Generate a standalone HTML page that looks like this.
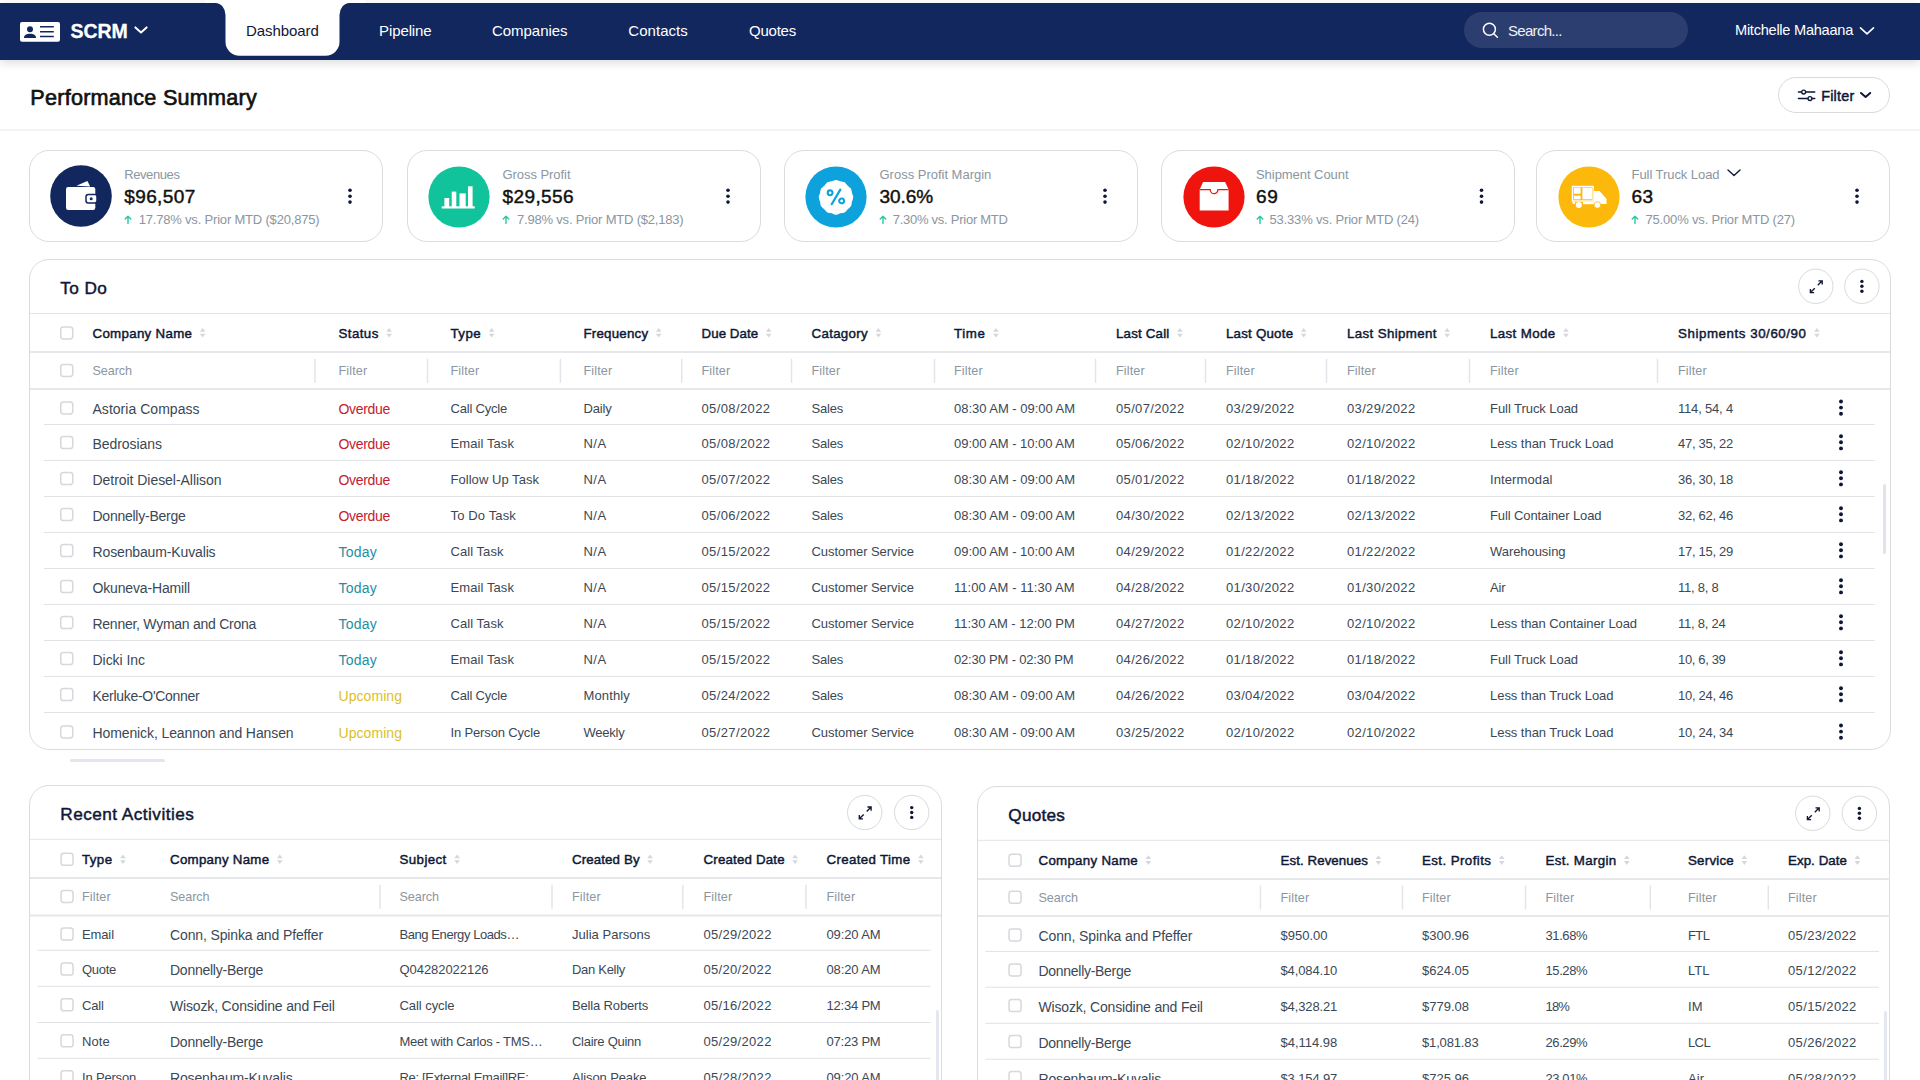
<!DOCTYPE html>
<html lang="en"><head><meta charset="utf-8"><title>SCRM Dashboard</title>
<style>
*{margin:0;padding:0}
html,body{width:1920px;height:1080px;overflow:hidden;background:#fff}
body{position:relative;font-family:"Liberation Sans",sans-serif;}
.a,.t,.ln,.cb,.cbtn,.card,.panel,.hdr,.hdr-shadow{position:absolute}
.t{white-space:nowrap;line-height:20px;font-size:14px}
.b{font-weight:700}
.m{font-weight:400;-webkit-text-stroke:0.45px currentColor}
.h{color:#0e1735;font-size:13.3px;font-weight:400;-webkit-text-stroke:0.45px #0e1735}
.f{color:#8a96a1;font-size:12.6px}
.d{color:#3a4856;font-size:13px}
.dn{color:#3a4856;font-size:14px}
.cb{width:13px;height:13px;box-sizing:border-box;border:1.5px solid #d5d7da;border-radius:3px;background:#fff}
.cbtn{width:35.5px;height:35.5px;box-sizing:border-box;border:1px solid #dcdfe2;border-radius:50%;background:#fff}
.card{box-sizing:border-box;border:1px solid #dbdcde;border-radius:20px;background:#fff}
.panel{box-sizing:border-box;border:1px solid #dbdcde;border-radius:20px;background:#fff}
.hdr{left:0;top:3px;width:1920px;height:56.5px;background:#12275e}
.hdr-shadow{left:0;top:3px;width:1920px;height:56.5px;box-shadow:0 3px 9px rgba(0,0,0,0.14)}
</style></head>
<body>
<div class="card" style="left:29px;top:150px;width:354px;height:92px"></div>
<div class="card" style="left:407px;top:150px;width:354px;height:92px"></div>
<div class="card" style="left:784px;top:150px;width:354px;height:92px"></div>
<div class="card" style="left:1161px;top:150px;width:354px;height:92px"></div>
<div class="card" style="left:1536px;top:150px;width:354px;height:92px"></div>
<div class="panel" style="left:29px;top:259px;width:1862px;height:491px"></div>
<div class="panel" style="left:29px;top:785px;width:913px;height:335px"></div>
<div class="panel" style="left:977px;top:786px;width:913px;height:334px"></div>
<svg class="a" style="left:0;top:0" width="1920" height="1080" viewBox="0 0 1920 1080"><rect x="0" y="129.50" width="1920" height="1" fill="#e6e8ea"/>
<g transform="translate(350.00,196.20)" fill="#0e1735"><circle cx="0" cy="-5.9" r="1.8"/><circle cx="0" cy="0" r="1.8"/><circle cx="0" cy="5.9" r="1.8"/></g>
<g transform="translate(728.00,196.20)" fill="#0e1735"><circle cx="0" cy="-5.9" r="1.8"/><circle cx="0" cy="0" r="1.8"/><circle cx="0" cy="5.9" r="1.8"/></g>
<g transform="translate(1105.00,196.20)" fill="#0e1735"><circle cx="0" cy="-5.9" r="1.8"/><circle cx="0" cy="0" r="1.8"/><circle cx="0" cy="5.9" r="1.8"/></g>
<g transform="translate(1481.50,196.20)" fill="#0e1735"><circle cx="0" cy="-5.9" r="1.8"/><circle cx="0" cy="0" r="1.8"/><circle cx="0" cy="5.9" r="1.8"/></g>
<g transform="translate(1857.00,196.20)" fill="#0e1735"><circle cx="0" cy="-5.9" r="1.8"/><circle cx="0" cy="0" r="1.8"/><circle cx="0" cy="5.9" r="1.8"/></g>
<circle cx="1815.80" cy="286.30" r="17.2" fill="#fff" stroke="#d8dadc" stroke-width="1"/>
<g transform="translate(1816.30,286.70)" fill="none" stroke="#0e1735" stroke-width="1.35"><path d="M1.5 -1.5 L5.6 -5.6 M2.2 -5.9 H5.9 V-2.2 M-1.5 1.5 L-5.6 5.6 M-2.2 5.9 H-5.9 V2.2"/></g>
<circle cx="1861.90" cy="286.30" r="17.2" fill="#fff" stroke="#d8dadc" stroke-width="1"/>
<g transform="translate(1861.90,286.30)" fill="#0e1735"><circle cx="0" cy="-4.9" r="1.7"/><circle cx="0" cy="0" r="1.7"/><circle cx="0" cy="4.9" r="1.7"/></g>
<rect x="30" y="313.00" width="1860" height="1" fill="#e2e4e7"/>
<rect x="30" y="351.00" width="1860" height="2" fill="#e5e7ea"/>
<rect x="30" y="388.00" width="1860" height="2" fill="#e5e7ea"/>
<rect x="60.75" y="326.90" width="12" height="12" rx="2.6" fill="#fff" stroke="#d6d8db" stroke-width="1.5"/>
<rect x="60.75" y="364.40" width="12" height="12" rx="2.6" fill="#fff" stroke="#d6d8db" stroke-width="1.5"/>
<path transform="translate(199.85,328.00)" d="M2.8 0 L5.6 3.8 H0 Z M2.8 9.6 L5.6 5.8 H0 Z" fill="#d4d7dc"/>
<path transform="translate(386.35,328.00)" d="M2.8 0 L5.6 3.8 H0 Z M2.8 9.6 L5.6 5.8 H0 Z" fill="#d4d7dc"/>
<path transform="translate(488.85,328.00)" d="M2.8 0 L5.6 3.8 H0 Z M2.8 9.6 L5.6 5.8 H0 Z" fill="#d4d7dc"/>
<path transform="translate(655.90,328.00)" d="M2.8 0 L5.6 3.8 H0 Z M2.8 9.6 L5.6 5.8 H0 Z" fill="#d4d7dc"/>
<path transform="translate(765.85,328.00)" d="M2.8 0 L5.6 3.8 H0 Z M2.8 9.6 L5.6 5.8 H0 Z" fill="#d4d7dc"/>
<path transform="translate(875.60,328.00)" d="M2.8 0 L5.6 3.8 H0 Z M2.8 9.6 L5.6 5.8 H0 Z" fill="#d4d7dc"/>
<path transform="translate(993.10,328.00)" d="M2.8 0 L5.6 3.8 H0 Z M2.8 9.6 L5.6 5.8 H0 Z" fill="#d4d7dc"/>
<path transform="translate(1177.10,328.00)" d="M2.8 0 L5.6 3.8 H0 Z M2.8 9.6 L5.6 5.8 H0 Z" fill="#d4d7dc"/>
<path transform="translate(1300.85,328.00)" d="M2.8 0 L5.6 3.8 H0 Z M2.8 9.6 L5.6 5.8 H0 Z" fill="#d4d7dc"/>
<path transform="translate(1444.35,328.00)" d="M2.8 0 L5.6 3.8 H0 Z M2.8 9.6 L5.6 5.8 H0 Z" fill="#d4d7dc"/>
<path transform="translate(1563.10,328.00)" d="M2.8 0 L5.6 3.8 H0 Z M2.8 9.6 L5.6 5.8 H0 Z" fill="#d4d7dc"/>
<path transform="translate(1814.10,328.00)" d="M2.8 0 L5.6 3.8 H0 Z M2.8 9.6 L5.6 5.8 H0 Z" fill="#d4d7dc"/>
<rect x="314.25" y="358.80" width="1.5" height="24.00" fill="#e2e5e9"/>
<rect x="426.75" y="358.80" width="1.5" height="24.00" fill="#e2e5e9"/>
<rect x="559.65" y="358.80" width="1.5" height="24.00" fill="#e2e5e9"/>
<rect x="680.95" y="358.80" width="1.5" height="24.00" fill="#e2e5e9"/>
<rect x="790.75" y="358.80" width="1.5" height="24.00" fill="#e2e5e9"/>
<rect x="933.75" y="358.80" width="1.5" height="24.00" fill="#e2e5e9"/>
<rect x="1094.75" y="358.80" width="1.5" height="24.00" fill="#e2e5e9"/>
<rect x="1204.75" y="358.80" width="1.5" height="24.00" fill="#e2e5e9"/>
<rect x="1325.75" y="358.80" width="1.5" height="24.00" fill="#e2e5e9"/>
<rect x="1468.75" y="358.80" width="1.5" height="24.00" fill="#e2e5e9"/>
<rect x="1656.75" y="358.80" width="1.5" height="24.00" fill="#e2e5e9"/>
<rect x="60.75" y="401.90" width="12" height="12" rx="2.6" fill="#fff" stroke="#d6d8db" stroke-width="1.5"/>
<g transform="translate(1841.00,407.60)" fill="#0e1735"><circle cx="0" cy="-6.1" r="1.95"/><circle cx="0" cy="0" r="1.95"/><circle cx="0" cy="6.1" r="1.95"/></g>
<rect x="60.75" y="436.60" width="12" height="12" rx="2.6" fill="#fff" stroke="#d6d8db" stroke-width="1.5"/>
<g transform="translate(1841.00,442.30)" fill="#0e1735"><circle cx="0" cy="-6.1" r="1.95"/><circle cx="0" cy="0" r="1.95"/><circle cx="0" cy="6.1" r="1.95"/></g>
<rect x="60.75" y="472.60" width="12" height="12" rx="2.6" fill="#fff" stroke="#d6d8db" stroke-width="1.5"/>
<g transform="translate(1841.00,478.30)" fill="#0e1735"><circle cx="0" cy="-6.1" r="1.95"/><circle cx="0" cy="0" r="1.95"/><circle cx="0" cy="6.1" r="1.95"/></g>
<rect x="60.75" y="508.60" width="12" height="12" rx="2.6" fill="#fff" stroke="#d6d8db" stroke-width="1.5"/>
<g transform="translate(1841.00,514.30)" fill="#0e1735"><circle cx="0" cy="-6.1" r="1.95"/><circle cx="0" cy="0" r="1.95"/><circle cx="0" cy="6.1" r="1.95"/></g>
<rect x="60.75" y="544.60" width="12" height="12" rx="2.6" fill="#fff" stroke="#d6d8db" stroke-width="1.5"/>
<g transform="translate(1841.00,550.30)" fill="#0e1735"><circle cx="0" cy="-6.1" r="1.95"/><circle cx="0" cy="0" r="1.95"/><circle cx="0" cy="6.1" r="1.95"/></g>
<rect x="60.75" y="580.60" width="12" height="12" rx="2.6" fill="#fff" stroke="#d6d8db" stroke-width="1.5"/>
<g transform="translate(1841.00,586.30)" fill="#0e1735"><circle cx="0" cy="-6.1" r="1.95"/><circle cx="0" cy="0" r="1.95"/><circle cx="0" cy="6.1" r="1.95"/></g>
<rect x="60.75" y="616.60" width="12" height="12" rx="2.6" fill="#fff" stroke="#d6d8db" stroke-width="1.5"/>
<g transform="translate(1841.00,622.30)" fill="#0e1735"><circle cx="0" cy="-6.1" r="1.95"/><circle cx="0" cy="0" r="1.95"/><circle cx="0" cy="6.1" r="1.95"/></g>
<rect x="60.75" y="652.60" width="12" height="12" rx="2.6" fill="#fff" stroke="#d6d8db" stroke-width="1.5"/>
<g transform="translate(1841.00,658.30)" fill="#0e1735"><circle cx="0" cy="-6.1" r="1.95"/><circle cx="0" cy="0" r="1.95"/><circle cx="0" cy="6.1" r="1.95"/></g>
<rect x="60.75" y="688.60" width="12" height="12" rx="2.6" fill="#fff" stroke="#d6d8db" stroke-width="1.5"/>
<g transform="translate(1841.00,694.30)" fill="#0e1735"><circle cx="0" cy="-6.1" r="1.95"/><circle cx="0" cy="0" r="1.95"/><circle cx="0" cy="6.1" r="1.95"/></g>
<rect x="60.75" y="725.90" width="12" height="12" rx="2.6" fill="#fff" stroke="#d6d8db" stroke-width="1.5"/>
<g transform="translate(1841.00,731.60)" fill="#0e1735"><circle cx="0" cy="-6.1" r="1.95"/><circle cx="0" cy="0" r="1.95"/><circle cx="0" cy="6.1" r="1.95"/></g>
<rect x="44" y="424.00" width="1831" height="1" fill="#e1e2e5"/>
<rect x="44" y="460.00" width="1831" height="1" fill="#e1e2e5"/>
<rect x="44" y="496.00" width="1831" height="1" fill="#e1e2e5"/>
<rect x="44" y="532.00" width="1831" height="1" fill="#e1e2e5"/>
<rect x="44" y="568.00" width="1831" height="1" fill="#e1e2e5"/>
<rect x="44" y="604.00" width="1831" height="1" fill="#e1e2e5"/>
<rect x="44" y="640.00" width="1831" height="1" fill="#e1e2e5"/>
<rect x="44" y="676.00" width="1831" height="1" fill="#e1e2e5"/>
<rect x="44" y="712.00" width="1831" height="1" fill="#e1e2e5"/>
<circle cx="864.70" cy="812.50" r="17.2" fill="#fff" stroke="#d8dadc" stroke-width="1"/>
<g transform="translate(865.20,812.90)" fill="none" stroke="#0e1735" stroke-width="1.35"><path d="M1.5 -1.5 L5.6 -5.6 M2.2 -5.9 H5.9 V-2.2 M-1.5 1.5 L-5.6 5.6 M-2.2 5.9 H-5.9 V2.2"/></g>
<circle cx="911.70" cy="812.50" r="17.2" fill="#fff" stroke="#d8dadc" stroke-width="1"/>
<g transform="translate(911.70,812.50)" fill="#0e1735"><circle cx="0" cy="-4.9" r="1.7"/><circle cx="0" cy="0" r="1.7"/><circle cx="0" cy="4.9" r="1.7"/></g>
<rect x="30" y="838.80" width="911" height="1" fill="#e2e4e7"/>
<rect x="30" y="877.00" width="911" height="2" fill="#e5e7ea"/>
<rect x="30" y="914.50" width="911" height="2" fill="#e5e7ea"/>
<rect x="61.05" y="853.30" width="12" height="12" rx="2.6" fill="#fff" stroke="#d6d8db" stroke-width="1.5"/>
<rect x="61.05" y="890.40" width="12" height="12" rx="2.6" fill="#fff" stroke="#d6d8db" stroke-width="1.5"/>
<path transform="translate(120.10,854.40)" d="M2.8 0 L5.6 3.8 H0 Z M2.8 9.6 L5.6 5.8 H0 Z" fill="#d4d7dc"/>
<path transform="translate(277.00,854.40)" d="M2.8 0 L5.6 3.8 H0 Z M2.8 9.6 L5.6 5.8 H0 Z" fill="#d4d7dc"/>
<path transform="translate(454.30,854.40)" d="M2.8 0 L5.6 3.8 H0 Z M2.8 9.6 L5.6 5.8 H0 Z" fill="#d4d7dc"/>
<path transform="translate(647.30,854.40)" d="M2.8 0 L5.6 3.8 H0 Z M2.8 9.6 L5.6 5.8 H0 Z" fill="#d4d7dc"/>
<path transform="translate(792.30,854.40)" d="M2.8 0 L5.6 3.8 H0 Z M2.8 9.6 L5.6 5.8 H0 Z" fill="#d4d7dc"/>
<path transform="translate(918.10,854.40)" d="M2.8 0 L5.6 3.8 H0 Z M2.8 9.6 L5.6 5.8 H0 Z" fill="#d4d7dc"/>
<rect x="379.25" y="884.80" width="1.5" height="24.00" fill="#e2e5e9"/>
<rect x="551.25" y="884.80" width="1.5" height="24.00" fill="#e2e5e9"/>
<rect x="682.05" y="884.80" width="1.5" height="24.00" fill="#e2e5e9"/>
<rect x="805.25" y="884.80" width="1.5" height="24.00" fill="#e2e5e9"/>
<rect x="61.05" y="928.10" width="12" height="12" rx="2.6" fill="#fff" stroke="#d6d8db" stroke-width="1.5"/>
<rect x="61.05" y="963.10" width="12" height="12" rx="2.6" fill="#fff" stroke="#d6d8db" stroke-width="1.5"/>
<rect x="61.05" y="998.80" width="12" height="12" rx="2.6" fill="#fff" stroke="#d6d8db" stroke-width="1.5"/>
<rect x="61.05" y="1034.80" width="12" height="12" rx="2.6" fill="#fff" stroke="#d6d8db" stroke-width="1.5"/>
<rect x="61.05" y="1070.80" width="12" height="12" rx="2.6" fill="#fff" stroke="#d6d8db" stroke-width="1.5"/>
<rect x="37.5" y="949.80" width="893.0" height="1" fill="#e1e2e5"/>
<rect x="37.5" y="985.90" width="893.0" height="1" fill="#e1e2e5"/>
<rect x="37.5" y="1022.00" width="893.0" height="1" fill="#e1e2e5"/>
<rect x="37.5" y="1057.90" width="893.0" height="1" fill="#e1e2e5"/>
<circle cx="1812.80" cy="813.30" r="17.2" fill="#fff" stroke="#d8dadc" stroke-width="1"/>
<g transform="translate(1813.30,813.70)" fill="none" stroke="#0e1735" stroke-width="1.35"><path d="M1.5 -1.5 L5.6 -5.6 M2.2 -5.9 H5.9 V-2.2 M-1.5 1.5 L-5.6 5.6 M-2.2 5.9 H-5.9 V2.2"/></g>
<circle cx="1859.40" cy="813.30" r="17.2" fill="#fff" stroke="#d8dadc" stroke-width="1"/>
<g transform="translate(1859.40,813.30)" fill="#0e1735"><circle cx="0" cy="-4.9" r="1.7"/><circle cx="0" cy="0" r="1.7"/><circle cx="0" cy="4.9" r="1.7"/></g>
<rect x="978" y="839.80" width="912" height="1" fill="#e2e4e7"/>
<rect x="978" y="878.00" width="912" height="2" fill="#e5e7ea"/>
<rect x="978" y="915.00" width="912" height="2" fill="#e5e7ea"/>
<rect x="1009.05" y="854.20" width="12" height="12" rx="2.6" fill="#fff" stroke="#d6d8db" stroke-width="1.5"/>
<rect x="1009.05" y="891.20" width="12" height="12" rx="2.6" fill="#fff" stroke="#d6d8db" stroke-width="1.5"/>
<path transform="translate(1145.60,855.30)" d="M2.8 0 L5.6 3.8 H0 Z M2.8 9.6 L5.6 5.8 H0 Z" fill="#d4d7dc"/>
<path transform="translate(1375.60,855.30)" d="M2.8 0 L5.6 3.8 H0 Z M2.8 9.6 L5.6 5.8 H0 Z" fill="#d4d7dc"/>
<path transform="translate(1499.00,855.30)" d="M2.8 0 L5.6 3.8 H0 Z M2.8 9.6 L5.6 5.8 H0 Z" fill="#d4d7dc"/>
<path transform="translate(1624.00,855.30)" d="M2.8 0 L5.6 3.8 H0 Z M2.8 9.6 L5.6 5.8 H0 Z" fill="#d4d7dc"/>
<path transform="translate(1741.60,855.30)" d="M2.8 0 L5.6 3.8 H0 Z M2.8 9.6 L5.6 5.8 H0 Z" fill="#d4d7dc"/>
<path transform="translate(1854.60,855.30)" d="M2.8 0 L5.6 3.8 H0 Z M2.8 9.6 L5.6 5.8 H0 Z" fill="#d4d7dc"/>
<rect x="1259.75" y="885.60" width="1.5" height="24.00" fill="#e2e5e9"/>
<rect x="1401.75" y="885.60" width="1.5" height="24.00" fill="#e2e5e9"/>
<rect x="1524.75" y="885.60" width="1.5" height="24.00" fill="#e2e5e9"/>
<rect x="1649.55" y="885.60" width="1.5" height="24.00" fill="#e2e5e9"/>
<rect x="1767.55" y="885.60" width="1.5" height="24.00" fill="#e2e5e9"/>
<rect x="1009.05" y="928.90" width="12" height="12" rx="2.6" fill="#fff" stroke="#d6d8db" stroke-width="1.5"/>
<rect x="1009.05" y="963.90" width="12" height="12" rx="2.6" fill="#fff" stroke="#d6d8db" stroke-width="1.5"/>
<rect x="1009.05" y="999.60" width="12" height="12" rx="2.6" fill="#fff" stroke="#d6d8db" stroke-width="1.5"/>
<rect x="1009.05" y="1035.60" width="12" height="12" rx="2.6" fill="#fff" stroke="#d6d8db" stroke-width="1.5"/>
<rect x="1009.05" y="1071.60" width="12" height="12" rx="2.6" fill="#fff" stroke="#d6d8db" stroke-width="1.5"/>
<rect x="985.3" y="950.90" width="893.7" height="1" fill="#e1e2e5"/>
<rect x="985.3" y="986.70" width="893.7" height="1" fill="#e1e2e5"/>
<rect x="985.3" y="1022.80" width="893.7" height="1" fill="#e1e2e5"/>
<rect x="985.3" y="1058.70" width="893.7" height="1" fill="#e1e2e5"/></svg>
<div class="hdr-shadow"></div>
<div class="hdr"></div>
<svg class="a" style="left:205px;top:0" width="160" height="62" viewBox="0 0 160 62"><path d="M0 0 H160 V3 H144.5 a10 12 0 0 0 -10 12 V41.8 a14 14 0 0 1 -14 14 H34.5 a14 14 0 0 1 -14 -14 V15 a10 12 0 0 0 -10 -12 H0 Z" fill="#fff"/></svg>
<svg class="a" style="left:20px;top:22px" width="40" height="20" viewBox="0 0 40 20"><rect x="0" y="0" width="40" height="19.8" rx="2" fill="#fff"/><circle cx="10" cy="7.2" r="3" fill="#12275e"/><path d="M4 15.6 c0 -2.6 2.6 -3.9 6 -3.9 s6 1.3 6 3.9 v0.4 h-12 z" fill="#12275e"/><path d="M20 4.8 H33.8 M20 9.7 H33.8 M20 14.5 H33.8" stroke="#12275e" stroke-width="1.6"/></svg>
<div class="t b" style="left:70.6px;top:19.00px;line-height:24px;font-size:19.5px;color:#fff;-webkit-text-stroke:0.3px #fff;letter-spacing:-0.055px;">SCRM</div>
<svg class="a" style="left:133px;top:25px" width="16" height="10" viewBox="0 0 16 10" fill="none" stroke="#fff" stroke-width="2" stroke-linecap="round" stroke-linejoin="round"><path d="M2.4 2.4 L8 7.4 L13.6 2.4"/></svg>
<div class="t " style="left:246px;top:21.10px;font-size:15px;color:#0e1735;letter-spacing:-0.077px;">Dashboard</div>
<div class="t " style="left:379px;top:21.10px;font-size:15px;color:#fff;letter-spacing:-0.097px;">Pipeline</div>
<div class="t " style="left:492px;top:21.10px;font-size:15px;color:#fff;letter-spacing:-0.042px;">Companies</div>
<div class="t " style="left:628.3px;top:21.10px;font-size:15px;color:#fff;letter-spacing:0.050px;">Contacts</div>
<div class="t " style="left:749px;top:21.10px;font-size:15px;color:#fff;letter-spacing:-0.229px;">Quotes</div>
<div class="a" style="left:1464px;top:11.5px;width:224px;height:36.5px;border-radius:19px;background:#2c3d70"></div>
<svg class="a" style="left:1481px;top:21px" width="18" height="18" viewBox="0 0 18 18" fill="none" stroke="#fff" stroke-width="1.5" stroke-linecap="round"><circle cx="8.4" cy="8.3" r="6"/><path d="M12.8 12.8 L16.4 16.2"/></svg>
<div class="t " style="left:1508px;top:20.80px;font-size:15px;color:#eef1f7;letter-spacing:-0.692px;">Search...</div>
<div class="t " style="left:1735px;top:20.40px;font-size:14.6px;color:#fff;letter-spacing:-0.265px;">Mitchelle Mahaana</div>
<svg class="a" style="left:1859px;top:25.5px" width="16" height="10" viewBox="0 0 16 10" fill="none" stroke="#fff" stroke-width="1.6" stroke-linecap="round" stroke-linejoin="round"><path d="M1.5 1.8 L8 7.8 L14.5 1.8"/></svg>
<div class="t m" style="left:30.3px;top:84.10px;line-height:28px;font-size:21.6px;color:#111;-webkit-text-stroke:0.65px #111;letter-spacing:0.247px;">Performance Summary</div>
<div class="a" style="left:1778px;top:77px;width:112px;height:35.5px;border-radius:18px;border:1px solid #d8dadd;box-sizing:border-box;background:#fff"></div>
<svg class="a" style="left:1797px;top:88px" width="20" height="14" viewBox="0 0 20 14" fill="none" stroke="#0e1735" stroke-width="1.35" stroke-linecap="round"><path d="M1.4 4 H4.6 M8.7 4 H17.8 M1.4 10.5 H10.9 M15 10.5 H17.8"/><circle cx="6.65" cy="4" r="1.95"/><circle cx="12.95" cy="10.5" r="1.95"/></svg>
<div class="t m" style="left:1821.2px;top:86.20px;font-size:14.4px;color:#0e1735;letter-spacing:0.219px;">Filter</div>
<svg class="a" style="left:1859px;top:90px" width="14" height="10" viewBox="0 0 14 10" fill="none" stroke="#0e1735" stroke-width="2" stroke-linecap="round" stroke-linejoin="round"><path d="M2 3 L6.6 6.9 L11.2 3"/></svg>
<svg class="a" style="left:49.8px;top:164.8px" width="62" height="62" viewBox="-31 -31 62 62"><circle cx="0" cy="0" r="30.8" fill="#12275e"/><path d="M-4.6 -10.2 L6.4 -14.9 L9.2 -9.4 Z" fill="#fff"/><rect x="-15" y="-9" width="29.3" height="23" rx="2.2" fill="#fff"/><rect x="5" y="-1.4" width="11" height="8.4" rx="2.2" fill="#fff" stroke="#12275e" stroke-width="1.5"/><circle cx="10.2" cy="2.8" r="1.5" fill="#12275e"/></svg>
<div class="t " style="left:124.2px;top:166.80px;line-height:16px;font-size:13px;color:#8a96a1;letter-spacing:-0.406px;">Revenues</div>
<div class="t m" style="left:124.2px;top:184.50px;line-height:24px;font-size:19px;color:#111;letter-spacing:0.402px;">$96,507</div>
<svg class="a" style="left:124.0px;top:215.3px" width="8" height="10" viewBox="0 0 8 10" fill="none" stroke="#2cc79f" stroke-width="1.4" stroke-linecap="round" stroke-linejoin="round"><path d="M4 8.6 V1.4 M1.2 4 L4 1.2 L6.8 4"/></svg>
<div class="t " style="left:138.7px;top:211.60px;line-height:16px;font-size:13px;color:#8a96a1;letter-spacing:-0.190px;">17.78% vs. Prior MTD ($20,875)</div>
<svg class="a" style="left:428.2px;top:165.8px" width="62" height="62" viewBox="-31 -31 62 62"><circle cx="0" cy="0" r="30.6" fill="#10c39b"/><rect x="-17.3" y="9.3" width="33" height="2.2" fill="#fff"/><rect x="-14.6" y="1" width="4.8" height="9" fill="#fff"/><rect x="-7.3" y="-5.4" width="4.6" height="15.4" fill="#fff"/><rect x="0.5" y="-3.6" width="6.2" height="13.6" fill="#fff"/><rect x="9" y="-10.7" width="4.6" height="20.7" fill="#fff"/></svg>
<div class="t " style="left:502.5px;top:166.80px;line-height:16px;font-size:13px;color:#8a96a1;letter-spacing:-0.052px;">Gross Profit</div>
<div class="t m" style="left:502.5px;top:184.50px;line-height:24px;font-size:19px;color:#111;letter-spacing:0.402px;">$29,556</div>
<svg class="a" style="left:502.3px;top:215.3px" width="8" height="10" viewBox="0 0 8 10" fill="none" stroke="#2cc79f" stroke-width="1.4" stroke-linecap="round" stroke-linejoin="round"><path d="M4 8.6 V1.4 M1.2 4 L4 1.2 L6.8 4"/></svg>
<div class="t " style="left:517px;top:211.60px;line-height:16px;font-size:13px;color:#8a96a1;letter-spacing:-0.195px;">7.98% vs. Prior MTD ($2,183)</div>
<svg class="a" style="left:805.2px;top:165.8px" width="62" height="62" viewBox="-31 -31 62 62"><circle cx="0" cy="0" r="30.6" fill="#0ea2dd"/><path d="M-2.11 -16.82 Q0.00 -17.90 2.11 -16.82 Q4.22 -15.74 6.58 -15.62 Q8.95 -15.50 10.24 -13.51 Q11.53 -11.53 13.51 -10.24 Q15.50 -8.95 15.62 -6.58 Q15.74 -4.22 16.82 -2.11 Q17.90 0.00 16.82 2.11 Q15.74 4.22 15.62 6.58 Q15.50 8.95 13.51 10.24 Q11.53 11.53 10.24 13.51 Q8.95 15.50 6.58 15.62 Q4.22 15.74 2.11 16.82 Q0.00 17.90 -2.11 16.82 Q-4.22 15.74 -6.58 15.62 Q-8.95 15.50 -10.24 13.51 Q-11.53 11.53 -13.51 10.24 Q-15.50 8.95 -15.62 6.58 Q-15.74 4.22 -16.82 2.11 Q-17.90 0.00 -16.82 -2.11 Q-15.74 -4.22 -15.62 -6.58 Q-15.50 -8.95 -13.51 -10.24 Q-11.53 -11.53 -10.24 -13.51 Q-8.95 -15.50 -6.58 -15.62 Q-4.22 -15.74 -2.11 -16.82 Z" fill="#fff" transform="translate(0,0.4)"/><circle cx="-5.9" cy="-4.2" r="2.4" fill="none" stroke="#0ea2dd" stroke-width="2.1"/><circle cx="5.6" cy="3.9" r="2.4" fill="none" stroke="#0ea2dd" stroke-width="2.1"/><path d="M4.3 -7.4 L-4.3 7.2" stroke="#0ea2dd" stroke-width="2.2" stroke-linecap="round"/></svg>
<div class="t " style="left:879.5px;top:166.80px;line-height:16px;font-size:13px;color:#8a96a1;letter-spacing:-0.010px;">Gross Profit Margin</div>
<div class="t m" style="left:879.5px;top:184.50px;line-height:24px;font-size:19px;color:#111;letter-spacing:-0.055px;">30.6%</div>
<svg class="a" style="left:879.3px;top:215.3px" width="8" height="10" viewBox="0 0 8 10" fill="none" stroke="#2cc79f" stroke-width="1.4" stroke-linecap="round" stroke-linejoin="round"><path d="M4 8.6 V1.4 M1.2 4 L4 1.2 L6.8 4"/></svg>
<div class="t " style="left:892.7px;top:211.60px;line-height:16px;font-size:13px;color:#8a96a1;letter-spacing:-0.259px;">7.30% vs. Prior MTD</div>
<svg class="a" style="left:1182.5px;top:165.8px" width="62" height="62" viewBox="-31 -31 62 62"><circle cx="0" cy="0" r="30.6" fill="#f0140f"/><path d="M-10.9 -15.1 H11.1 L14.6 -7.6 V13.4 H-14.3 V-7.6 Z" fill="#fff"/><path d="M-14.3 -7.3 H-3.7 a3.8 4 0 0 0 7.6 0 H14.6" fill="none" stroke="#f0140f" stroke-width="1.2"/></svg>
<div class="t " style="left:1256px;top:166.80px;line-height:16px;font-size:13px;color:#8a96a1;letter-spacing:-0.052px;">Shipment Count</div>
<div class="t m" style="left:1256px;top:184.50px;line-height:24px;font-size:19px;color:#111;letter-spacing:0.680px;">69</div>
<svg class="a" style="left:1255.8px;top:215.3px" width="8" height="10" viewBox="0 0 8 10" fill="none" stroke="#2cc79f" stroke-width="1.4" stroke-linecap="round" stroke-linejoin="round"><path d="M4 8.6 V1.4 M1.2 4 L4 1.2 L6.8 4"/></svg>
<div class="t " style="left:1269.5px;top:211.60px;line-height:16px;font-size:13px;color:#8a96a1;letter-spacing:-0.175px;">53.33% vs. Prior MTD (24)</div>
<svg class="a" style="left:1557.5px;top:165.8px" width="62" height="62" viewBox="-31 -31 62 62"><circle cx="0" cy="0" r="30.6" fill="#fdb90b"/><rect x="-16.5" y="-10.5" width="20.6" height="14.5" fill="none" stroke="#fff" stroke-width="1.4"/><rect x="-15" y="-9.3" width="6.6" height="6" fill="#fff"/><rect x="-15" y="-1.3" width="6.6" height="3.6" fill="#fff"/><rect x="-6.6" y="-9.3" width="9.6" height="11.6" fill="#fff"/><path d="M5 -6 H10.6 L17.5 2 V7 H5 Z" fill="#fff"/><rect x="-6" y="4.6" width="11" height="2.6" fill="#fff"/><rect x="-16.5" y="4.8" width="2.6" height="2" fill="#fff"/><circle cx="-10.2" cy="8" r="3" fill="#fff"/><circle cx="8.4" cy="8" r="3.3" fill="#fff" stroke="#fdb90b" stroke-width="0.8"/></svg>
<div class="t " style="left:1631.5px;top:166.80px;line-height:16px;font-size:13px;color:#8a96a1;letter-spacing:-0.058px;">Full Truck Load</div>
<div class="t m" style="left:1631.5px;top:184.50px;line-height:24px;font-size:19px;color:#111;letter-spacing:0.430px;">63</div>
<svg class="a" style="left:1631.3px;top:215.3px" width="8" height="10" viewBox="0 0 8 10" fill="none" stroke="#2cc79f" stroke-width="1.4" stroke-linecap="round" stroke-linejoin="round"><path d="M4 8.6 V1.4 M1.2 4 L4 1.2 L6.8 4"/></svg>
<div class="t " style="left:1645.5px;top:211.60px;line-height:16px;font-size:13px;color:#8a96a1;letter-spacing:-0.175px;">75.00% vs. Prior MTD (27)</div>
<svg class="a" style="left:1726px;top:168px" width="16" height="10" viewBox="0 0 16 10" fill="none" stroke="#0e1735" stroke-width="1.4" stroke-linecap="round" stroke-linejoin="round"><path d="M2 2 L8 7.4 L14 2"/></svg>
<div class="t m" style="left:60.3px;top:276.00px;line-height:24px;font-size:17.2px;color:#0e1735;letter-spacing:0.419px;">To Do</div>
<div class="t h" style="left:92.5px;top:323.50px;letter-spacing:0.306px;">Company Name</div>
<div class="t f" style="left:92.5px;top:361.40px;letter-spacing:-0.068px;">Search</div>
<div class="t h" style="left:338.5px;top:323.50px;letter-spacing:0.424px;">Status</div>
<div class="t f" style="left:338.5px;top:361.40px;letter-spacing:0.117px;">Filter</div>
<div class="t h" style="left:450.5px;top:323.50px;letter-spacing:0.480px;">Type</div>
<div class="t f" style="left:450.5px;top:361.40px;letter-spacing:0.117px;">Filter</div>
<div class="t h" style="left:583.5px;top:323.50px;letter-spacing:0.219px;">Frequency</div>
<div class="t f" style="left:583.5px;top:361.40px;letter-spacing:0.117px;">Filter</div>
<div class="t h" style="left:701.5px;top:323.50px;letter-spacing:0.070px;">Due Date</div>
<div class="t f" style="left:701.5px;top:361.40px;letter-spacing:0.117px;">Filter</div>
<div class="t h" style="left:811.5px;top:323.50px;letter-spacing:0.316px;">Catagory</div>
<div class="t f" style="left:811.5px;top:361.40px;letter-spacing:0.117px;">Filter</div>
<div class="t h" style="left:954px;top:323.50px;letter-spacing:0.609px;">Time</div>
<div class="t f" style="left:954px;top:361.40px;letter-spacing:0.117px;">Filter</div>
<div class="t h" style="left:1116px;top:323.50px;letter-spacing:0.196px;">Last Call</div>
<div class="t f" style="left:1116px;top:361.40px;letter-spacing:0.117px;">Filter</div>
<div class="t h" style="left:1226px;top:323.50px;letter-spacing:0.219px;">Last Quote</div>
<div class="t f" style="left:1226px;top:361.40px;letter-spacing:0.117px;">Filter</div>
<div class="t h" style="left:1347px;top:323.50px;letter-spacing:0.364px;">Last Shipment</div>
<div class="t f" style="left:1347px;top:361.40px;letter-spacing:0.117px;">Filter</div>
<div class="t h" style="left:1490px;top:323.50px;letter-spacing:0.378px;">Last Mode</div>
<div class="t f" style="left:1490px;top:361.40px;letter-spacing:0.117px;">Filter</div>
<div class="t h" style="left:1678px;top:323.50px;letter-spacing:0.568px;">Shipments 30/60/90</div>
<div class="t f" style="left:1678px;top:361.40px;letter-spacing:0.117px;">Filter</div>
<div class="t dn" style="left:92.5px;top:398.90px;letter-spacing:0.027px;">Astoria Compass</div>
<div class="t dn" style="left:338.5px;top:398.90px;color:#c4202d;letter-spacing:-0.315px;">Overdue</div>
<div class="t d" style="left:450.5px;top:398.90px;letter-spacing:-0.202px;">Call Cycle</div>
<div class="t d" style="left:583.5px;top:398.90px;letter-spacing:-0.181px;">Daily</div>
<div class="t d" style="left:701.5px;top:398.90px;letter-spacing:0.392px;">05/08/2022</div>
<div class="t d" style="left:811.5px;top:398.90px;letter-spacing:-0.206px;">Sales</div>
<div class="t d" style="left:954px;top:398.90px;letter-spacing:-0.021px;">08:30 AM - 09:00 AM</div>
<div class="t d" style="left:1116px;top:398.90px;letter-spacing:0.342px;">05/07/2022</div>
<div class="t d" style="left:1226px;top:398.90px;letter-spacing:0.342px;">03/29/2022</div>
<div class="t d" style="left:1347px;top:398.90px;letter-spacing:0.342px;">03/29/2022</div>
<div class="t d" style="left:1490px;top:398.90px;letter-spacing:-0.058px;">Full Truck Load</div>
<div class="t d" style="left:1678px;top:398.90px;letter-spacing:-0.188px;">114, 54, 4</div>
<div class="t dn" style="left:92.5px;top:433.60px;letter-spacing:-0.055px;">Bedrosians</div>
<div class="t dn" style="left:338.5px;top:433.60px;color:#c4202d;letter-spacing:-0.315px;">Overdue</div>
<div class="t d" style="left:450.5px;top:433.60px;letter-spacing:0.087px;">Email Task</div>
<div class="t d" style="left:583.5px;top:433.60px;letter-spacing:0.443px;">N/A</div>
<div class="t d" style="left:701.5px;top:433.60px;letter-spacing:0.392px;">05/08/2022</div>
<div class="t d" style="left:811.5px;top:433.60px;letter-spacing:-0.206px;">Sales</div>
<div class="t d" style="left:954px;top:433.60px;letter-spacing:-0.037px;">09:00 AM - 10:00 AM</div>
<div class="t d" style="left:1116px;top:433.60px;letter-spacing:0.342px;">05/06/2022</div>
<div class="t d" style="left:1226px;top:433.60px;letter-spacing:0.342px;">02/10/2022</div>
<div class="t d" style="left:1347px;top:433.60px;letter-spacing:0.342px;">02/10/2022</div>
<div class="t d" style="left:1490px;top:433.60px;letter-spacing:-0.041px;">Less than Truck Load</div>
<div class="t d" style="left:1678px;top:433.60px;letter-spacing:-0.283px;">47, 35, 22</div>
<div class="t dn" style="left:92.5px;top:469.60px;letter-spacing:-0.043px;">Detroit Diesel-Allison</div>
<div class="t dn" style="left:338.5px;top:469.60px;color:#c4202d;letter-spacing:-0.315px;">Overdue</div>
<div class="t d" style="left:450.5px;top:469.60px;letter-spacing:0.042px;">Follow Up Task</div>
<div class="t d" style="left:583.5px;top:469.60px;letter-spacing:0.443px;">N/A</div>
<div class="t d" style="left:701.5px;top:469.60px;letter-spacing:0.392px;">05/07/2022</div>
<div class="t d" style="left:811.5px;top:469.60px;letter-spacing:-0.206px;">Sales</div>
<div class="t d" style="left:954px;top:469.60px;letter-spacing:-0.021px;">08:30 AM - 09:00 AM</div>
<div class="t d" style="left:1116px;top:469.60px;letter-spacing:0.342px;">05/01/2022</div>
<div class="t d" style="left:1226px;top:469.60px;letter-spacing:0.342px;">01/18/2022</div>
<div class="t d" style="left:1347px;top:469.60px;letter-spacing:0.342px;">01/18/2022</div>
<div class="t d" style="left:1490px;top:469.60px;letter-spacing:0.108px;">Intermodal</div>
<div class="t d" style="left:1678px;top:469.60px;letter-spacing:-0.283px;">36, 30, 18</div>
<div class="t dn" style="left:92.5px;top:505.60px;letter-spacing:-0.250px;">Donnelly-Berge</div>
<div class="t dn" style="left:338.5px;top:505.60px;color:#c4202d;letter-spacing:-0.315px;">Overdue</div>
<div class="t d" style="left:450.5px;top:505.60px;letter-spacing:0.142px;">To Do Task</div>
<div class="t d" style="left:583.5px;top:505.60px;letter-spacing:0.443px;">N/A</div>
<div class="t d" style="left:701.5px;top:505.60px;letter-spacing:0.392px;">05/06/2022</div>
<div class="t d" style="left:811.5px;top:505.60px;letter-spacing:-0.206px;">Sales</div>
<div class="t d" style="left:954px;top:505.60px;letter-spacing:-0.021px;">08:30 AM - 09:00 AM</div>
<div class="t d" style="left:1116px;top:505.60px;letter-spacing:0.342px;">04/30/2022</div>
<div class="t d" style="left:1226px;top:505.60px;letter-spacing:0.342px;">02/13/2022</div>
<div class="t d" style="left:1347px;top:505.60px;letter-spacing:0.342px;">02/13/2022</div>
<div class="t d" style="left:1490px;top:505.60px;letter-spacing:-0.104px;">Full Container Load</div>
<div class="t d" style="left:1678px;top:505.60px;letter-spacing:-0.283px;">32, 62, 46</div>
<div class="t dn" style="left:92.5px;top:541.60px;letter-spacing:-0.135px;">Rosenbaum-Kuvalis</div>
<div class="t dn" style="left:338.5px;top:541.60px;color:#1e8fa2;letter-spacing:0.228px;">Today</div>
<div class="t d" style="left:450.5px;top:541.60px;letter-spacing:0.054px;">Call Task</div>
<div class="t d" style="left:583.5px;top:541.60px;letter-spacing:0.443px;">N/A</div>
<div class="t d" style="left:701.5px;top:541.60px;letter-spacing:0.392px;">05/15/2022</div>
<div class="t d" style="left:811.5px;top:541.60px;letter-spacing:-0.051px;">Customer Service</div>
<div class="t d" style="left:954px;top:541.60px;letter-spacing:-0.037px;">09:00 AM - 10:00 AM</div>
<div class="t d" style="left:1116px;top:541.60px;letter-spacing:0.342px;">04/29/2022</div>
<div class="t d" style="left:1226px;top:541.60px;letter-spacing:0.342px;">01/22/2022</div>
<div class="t d" style="left:1347px;top:541.60px;letter-spacing:0.342px;">01/22/2022</div>
<div class="t d" style="left:1490px;top:541.60px;letter-spacing:-0.057px;">Warehousing</div>
<div class="t d" style="left:1678px;top:541.60px;letter-spacing:-0.283px;">17, 15, 29</div>
<div class="t dn" style="left:92.5px;top:577.60px;letter-spacing:-0.150px;">Okuneva-Hamill</div>
<div class="t dn" style="left:338.5px;top:577.60px;color:#1e8fa2;letter-spacing:0.228px;">Today</div>
<div class="t d" style="left:450.5px;top:577.60px;letter-spacing:0.087px;">Email Task</div>
<div class="t d" style="left:583.5px;top:577.60px;letter-spacing:0.443px;">N/A</div>
<div class="t d" style="left:701.5px;top:577.60px;letter-spacing:0.392px;">05/15/2022</div>
<div class="t d" style="left:811.5px;top:577.60px;letter-spacing:-0.051px;">Customer Service</div>
<div class="t d" style="left:954px;top:577.60px;letter-spacing:0.064px;">11:00 AM - 11:30 AM</div>
<div class="t d" style="left:1116px;top:577.60px;letter-spacing:0.342px;">04/28/2022</div>
<div class="t d" style="left:1226px;top:577.60px;letter-spacing:0.342px;">01/30/2022</div>
<div class="t d" style="left:1347px;top:577.60px;letter-spacing:0.342px;">01/30/2022</div>
<div class="t d" style="left:1490px;top:577.60px;letter-spacing:-0.130px;">Air</div>
<div class="t d" style="left:1678px;top:577.60px;letter-spacing:-0.238px;">11, 8, 8</div>
<div class="t dn" style="left:92.5px;top:613.60px;letter-spacing:-0.262px;">Renner, Wyman and Crona</div>
<div class="t dn" style="left:338.5px;top:613.60px;color:#1e8fa2;letter-spacing:0.228px;">Today</div>
<div class="t d" style="left:450.5px;top:613.60px;letter-spacing:0.054px;">Call Task</div>
<div class="t d" style="left:583.5px;top:613.60px;letter-spacing:0.443px;">N/A</div>
<div class="t d" style="left:701.5px;top:613.60px;letter-spacing:0.392px;">05/15/2022</div>
<div class="t d" style="left:811.5px;top:613.60px;letter-spacing:-0.051px;">Customer Service</div>
<div class="t d" style="left:954px;top:613.60px;letter-spacing:-0.025px;">11:30 AM - 12:00 PM</div>
<div class="t d" style="left:1116px;top:613.60px;letter-spacing:0.342px;">04/27/2022</div>
<div class="t d" style="left:1226px;top:613.60px;letter-spacing:0.342px;">02/10/2022</div>
<div class="t d" style="left:1347px;top:613.60px;letter-spacing:0.342px;">02/10/2022</div>
<div class="t d" style="left:1490px;top:613.60px;letter-spacing:-0.079px;">Less than Container Load</div>
<div class="t d" style="left:1678px;top:613.60px;letter-spacing:-0.238px;">11, 8, 24</div>
<div class="t dn" style="left:92.5px;top:649.60px;letter-spacing:-0.045px;">Dicki Inc</div>
<div class="t dn" style="left:338.5px;top:649.60px;color:#1e8fa2;letter-spacing:0.228px;">Today</div>
<div class="t d" style="left:450.5px;top:649.60px;letter-spacing:0.087px;">Email Task</div>
<div class="t d" style="left:583.5px;top:649.60px;letter-spacing:0.443px;">N/A</div>
<div class="t d" style="left:701.5px;top:649.60px;letter-spacing:0.392px;">05/15/2022</div>
<div class="t d" style="left:811.5px;top:649.60px;letter-spacing:-0.206px;">Sales</div>
<div class="t d" style="left:954px;top:649.60px;letter-spacing:-0.176px;">02:30 PM - 02:30 PM</div>
<div class="t d" style="left:1116px;top:649.60px;letter-spacing:0.342px;">04/26/2022</div>
<div class="t d" style="left:1226px;top:649.60px;letter-spacing:0.342px;">01/18/2022</div>
<div class="t d" style="left:1347px;top:649.60px;letter-spacing:0.342px;">01/18/2022</div>
<div class="t d" style="left:1490px;top:649.60px;letter-spacing:-0.058px;">Full Truck Load</div>
<div class="t d" style="left:1678px;top:649.60px;letter-spacing:-0.345px;">10, 6, 39</div>
<div class="t dn" style="left:92.5px;top:685.60px;letter-spacing:-0.289px;">Kerluke-O'Conner</div>
<div class="t dn" style="left:338.5px;top:685.60px;color:#dbc128;letter-spacing:0.059px;">Upcoming</div>
<div class="t d" style="left:450.5px;top:685.60px;letter-spacing:-0.202px;">Call Cycle</div>
<div class="t d" style="left:583.5px;top:685.60px;letter-spacing:0.138px;">Monthly</div>
<div class="t d" style="left:701.5px;top:685.60px;letter-spacing:0.392px;">05/24/2022</div>
<div class="t d" style="left:811.5px;top:685.60px;letter-spacing:-0.206px;">Sales</div>
<div class="t d" style="left:954px;top:685.60px;letter-spacing:-0.021px;">08:30 AM - 09:00 AM</div>
<div class="t d" style="left:1116px;top:685.60px;letter-spacing:0.342px;">04/26/2022</div>
<div class="t d" style="left:1226px;top:685.60px;letter-spacing:0.342px;">03/04/2022</div>
<div class="t d" style="left:1347px;top:685.60px;letter-spacing:0.342px;">03/04/2022</div>
<div class="t d" style="left:1490px;top:685.60px;letter-spacing:-0.041px;">Less than Truck Load</div>
<div class="t d" style="left:1678px;top:685.60px;letter-spacing:-0.283px;">10, 24, 46</div>
<div class="t dn" style="left:92.5px;top:722.90px;letter-spacing:-0.104px;">Homenick, Leannon and Hansen</div>
<div class="t dn" style="left:338.5px;top:722.90px;color:#dbc128;letter-spacing:0.059px;">Upcoming</div>
<div class="t d" style="left:450.5px;top:722.90px;letter-spacing:-0.151px;">In Person Cycle</div>
<div class="t d" style="left:583.5px;top:722.90px;letter-spacing:-0.232px;">Weekly</div>
<div class="t d" style="left:701.5px;top:722.90px;letter-spacing:0.392px;">05/27/2022</div>
<div class="t d" style="left:811.5px;top:722.90px;letter-spacing:-0.051px;">Customer Service</div>
<div class="t d" style="left:954px;top:722.90px;letter-spacing:-0.021px;">08:30 AM - 09:00 AM</div>
<div class="t d" style="left:1116px;top:722.90px;letter-spacing:0.342px;">03/25/2022</div>
<div class="t d" style="left:1226px;top:722.90px;letter-spacing:0.342px;">02/10/2022</div>
<div class="t d" style="left:1347px;top:722.90px;letter-spacing:0.342px;">02/10/2022</div>
<div class="t d" style="left:1490px;top:722.90px;letter-spacing:-0.041px;">Less than Truck Load</div>
<div class="t d" style="left:1678px;top:722.90px;letter-spacing:-0.283px;">10, 24, 34</div>
<div class="a" style="left:1883px;top:484px;width:3px;height:69.5px;border-radius:2px;background:#e1e3ea"></div>
<div class="a" style="left:70px;top:759px;width:95px;height:3px;border-radius:2px;background:#e1e6ee"></div>
<div class="t m" style="left:60.3px;top:801.90px;line-height:24px;font-size:17.2px;color:#0e1735;letter-spacing:0.464px;">Recent Activities</div>
<div class="t h" style="left:82px;top:849.90px;letter-spacing:0.418px;">Type</div>
<div class="t f" style="left:82px;top:887.40px;letter-spacing:0.117px;">Filter</div>
<div class="t h" style="left:170px;top:849.90px;letter-spacing:0.277px;">Company Name</div>
<div class="t f" style="left:170px;top:887.40px;letter-spacing:-0.068px;">Search</div>
<div class="t h" style="left:399.5px;top:849.90px;letter-spacing:0.406px;">Subject</div>
<div class="t f" style="left:399.5px;top:887.40px;letter-spacing:-0.068px;">Search</div>
<div class="t h" style="left:572px;top:849.90px;letter-spacing:0.117px;">Created By</div>
<div class="t f" style="left:572px;top:887.40px;letter-spacing:0.117px;">Filter</div>
<div class="t h" style="left:703.5px;top:849.90px;letter-spacing:0.176px;">Created Date</div>
<div class="t f" style="left:703.5px;top:887.40px;letter-spacing:0.117px;">Filter</div>
<div class="t h" style="left:826.5px;top:849.90px;letter-spacing:0.348px;">Created Time</div>
<div class="t f" style="left:826.5px;top:887.40px;letter-spacing:0.117px;">Filter</div>
<div class="t d" style="left:82px;top:925.10px;letter-spacing:-0.123px;">Email</div>
<div class="t dn" style="left:170px;top:925.10px;letter-spacing:-0.133px;">Conn, Spinka and Pfeffer</div>
<div class="t d" style="left:399.5px;top:925.10px;letter-spacing:-0.428px;">Bang Energy Loads…</div>
<div class="t d" style="left:572px;top:925.10px;letter-spacing:0.019px;">Julia Parsons</div>
<div class="t d" style="left:703.5px;top:925.10px;letter-spacing:0.312px;">05/29/2022</div>
<div class="t d" style="left:826.5px;top:925.10px;letter-spacing:-0.117px;">09:20 AM</div>
<div class="t d" style="left:82px;top:960.10px;letter-spacing:-0.284px;">Quote</div>
<div class="t dn" style="left:170px;top:960.10px;letter-spacing:-0.250px;">Donnelly-Berge</div>
<div class="t d" style="left:399.5px;top:960.10px;letter-spacing:-0.055px;">Q04282022126</div>
<div class="t d" style="left:572px;top:960.10px;letter-spacing:-0.293px;">Dan Kelly</div>
<div class="t d" style="left:703.5px;top:960.10px;letter-spacing:0.312px;">05/20/2022</div>
<div class="t d" style="left:826.5px;top:960.10px;letter-spacing:-0.117px;">08:20 AM</div>
<div class="t d" style="left:82px;top:995.80px;letter-spacing:-0.202px;">Call</div>
<div class="t dn" style="left:170px;top:995.80px;letter-spacing:-0.160px;">Wisozk, Considine and Feil</div>
<div class="t d" style="left:399.5px;top:995.80px;letter-spacing:-0.062px;">Call cycle</div>
<div class="t d" style="left:572px;top:995.80px;letter-spacing:-0.157px;">Bella Roberts</div>
<div class="t d" style="left:703.5px;top:995.80px;letter-spacing:0.312px;">05/16/2022</div>
<div class="t d" style="left:826.5px;top:995.80px;letter-spacing:-0.207px;">12:34 PM</div>
<div class="t d" style="left:82px;top:1031.80px;letter-spacing:0.058px;">Note</div>
<div class="t dn" style="left:170px;top:1031.80px;letter-spacing:-0.250px;">Donnelly-Berge</div>
<div class="t d" style="left:399.5px;top:1031.80px;letter-spacing:-0.243px;">Meet with Carlos - TMS…</div>
<div class="t d" style="left:572px;top:1031.80px;letter-spacing:-0.272px;">Claire Quinn</div>
<div class="t d" style="left:703.5px;top:1031.80px;letter-spacing:0.312px;">05/29/2022</div>
<div class="t d" style="left:826.5px;top:1031.80px;letter-spacing:-0.207px;">07:23 PM</div>
<div class="t d" style="left:82px;top:1067.80px;letter-spacing:-0.184px;">In Person</div>
<div class="t dn" style="left:170px;top:1067.80px;letter-spacing:-0.165px;">Rosenbaum-Kuvalis</div>
<div class="t d" style="left:399.5px;top:1067.80px;letter-spacing:-0.328px;">Re: [External Email]RE:</div>
<div class="t d" style="left:572px;top:1067.80px;letter-spacing:-0.124px;">Alison Peake</div>
<div class="t d" style="left:703.5px;top:1067.80px;letter-spacing:0.312px;">05/28/2022</div>
<div class="t d" style="left:826.5px;top:1067.80px;letter-spacing:-0.117px;">09:20 AM</div>
<div class="a" style="left:935.5px;top:1010px;width:3px;height:80px;border-radius:2px;background:#e4e6f0"></div>
<div class="t m" style="left:1008.3px;top:802.90px;line-height:24px;font-size:17.2px;color:#0e1735;letter-spacing:0.213px;">Quotes</div>
<div class="t h" style="left:1038.5px;top:850.80px;letter-spacing:0.285px;">Company Name</div>
<div class="t f" style="left:1038.5px;top:888.20px;letter-spacing:-0.068px;">Search</div>
<div class="t h" style="left:1280.5px;top:850.80px;letter-spacing:0.078px;">Est. Revenues</div>
<div class="t f" style="left:1280.5px;top:888.20px;letter-spacing:0.117px;">Filter</div>
<div class="t h" style="left:1422px;top:850.80px;letter-spacing:0.425px;">Est. Profits</div>
<div class="t f" style="left:1422px;top:888.20px;letter-spacing:0.117px;">Filter</div>
<div class="t h" style="left:1545.5px;top:850.80px;letter-spacing:0.332px;">Est. Margin</div>
<div class="t f" style="left:1545.5px;top:888.20px;letter-spacing:0.117px;">Filter</div>
<div class="t h" style="left:1688px;top:850.80px;letter-spacing:0.237px;">Service</div>
<div class="t f" style="left:1688px;top:888.20px;letter-spacing:0.117px;">Filter</div>
<div class="t h" style="left:1788px;top:850.80px;letter-spacing:0.068px;">Exp. Date</div>
<div class="t f" style="left:1788px;top:888.20px;letter-spacing:0.117px;">Filter</div>
<div class="t dn" style="left:1038.5px;top:925.90px;letter-spacing:-0.104px;">Conn, Spinka and Pfeffer</div>
<div class="t d" style="left:1280.5px;top:925.90px;letter-spacing:0.000px;">$950.00</div>
<div class="t d" style="left:1422px;top:925.90px;letter-spacing:0.000px;">$300.96</div>
<div class="t d" style="left:1545.5px;top:925.90px;letter-spacing:-0.399px;">31.68%</div>
<div class="t d" style="left:1688px;top:925.90px;letter-spacing:-0.575px;">FTL</div>
<div class="t d" style="left:1788px;top:925.90px;letter-spacing:0.362px;">05/23/2022</div>
<div class="t dn" style="left:1038.5px;top:960.90px;letter-spacing:-0.286px;">Donnelly-Berge</div>
<div class="t d" style="left:1280.5px;top:960.90px;letter-spacing:-0.127px;">$4,084.10</div>
<div class="t d" style="left:1422px;top:960.90px;letter-spacing:0.000px;">$624.05</div>
<div class="t d" style="left:1545.5px;top:960.90px;letter-spacing:-0.399px;">15.28%</div>
<div class="t d" style="left:1688px;top:960.90px;letter-spacing:-0.012px;">LTL</div>
<div class="t d" style="left:1788px;top:960.90px;letter-spacing:0.362px;">05/12/2022</div>
<div class="t dn" style="left:1038.5px;top:996.60px;letter-spacing:-0.175px;">Wisozk, Considine and Feil</div>
<div class="t d" style="left:1280.5px;top:996.60px;letter-spacing:-0.127px;">$4,328.21</div>
<div class="t d" style="left:1422px;top:996.60px;letter-spacing:0.000px;">$779.08</div>
<div class="t d" style="left:1545.5px;top:996.60px;letter-spacing:-0.844px;">18%</div>
<div class="t d" style="left:1688px;top:996.60px;letter-spacing:0.023px;">IM</div>
<div class="t d" style="left:1788px;top:996.60px;letter-spacing:0.362px;">05/15/2022</div>
<div class="t dn" style="left:1038.5px;top:1032.60px;letter-spacing:-0.286px;">Donnelly-Berge</div>
<div class="t d" style="left:1280.5px;top:1032.60px;letter-spacing:-0.019px;">$4,114.98</div>
<div class="t d" style="left:1422px;top:1032.60px;letter-spacing:-0.149px;">$1,081.83</div>
<div class="t d" style="left:1545.5px;top:1032.60px;letter-spacing:-0.399px;">26.29%</div>
<div class="t d" style="left:1688px;top:1032.60px;letter-spacing:-0.620px;">LCL</div>
<div class="t d" style="left:1788px;top:1032.60px;letter-spacing:0.362px;">05/26/2022</div>
<div class="t dn" style="left:1038.5px;top:1068.60px;letter-spacing:-0.165px;">Rosenbaum-Kuvalis</div>
<div class="t d" style="left:1280.5px;top:1068.60px;letter-spacing:-0.127px;">$3,154.97</div>
<div class="t d" style="left:1422px;top:1068.60px;letter-spacing:0.000px;">$725.96</div>
<div class="t d" style="left:1545.5px;top:1068.60px;letter-spacing:-0.399px;">23.01%</div>
<div class="t d" style="left:1688px;top:1068.60px;letter-spacing:0.036px;">Air</div>
<div class="t d" style="left:1788px;top:1068.60px;letter-spacing:0.362px;">05/28/2022</div>
<div class="a" style="left:1884px;top:1010.5px;width:3px;height:80px;border-radius:2px;background:#e4e6f0"></div>
</body></html>
